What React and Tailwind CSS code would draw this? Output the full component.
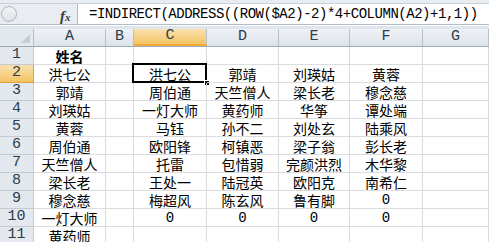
import React from "react";

const cols = [
  { key: "A", w: "w-[72px]" },
  { key: "B", w: "w-[28px]" },
  { key: "C", w: "w-[73px]" },
  { key: "D", w: "w-[72px]" },
  { key: "E", w: "w-[71px]" },
  { key: "F", w: "w-[73px]" },
  { key: "G", w: "flex-1" },
];

const data = [
  ["姓名", "", "", "", "", "", ""],
  ["洪七公", "", "洪七公", "郭靖", "刘瑛姑", "黄蓉", ""],
  ["郭靖", "", "周伯通", "天竺僧人", "梁长老", "穆念慈", ""],
  ["刘瑛姑", "", "一灯大师", "黄药师", "华筝", "谭处端", ""],
  ["黄蓉", "", "马钰", "孙不二", "刘处玄", "陆乘风", ""],
  ["周伯通", "", "欧阳锋", "柯镇恶", "梁子翁", "彭长老", ""],
  ["天竺僧人", "", "托雷", "包惜弱", "完颜洪烈", "木华黎", ""],
  ["梁长老", "", "王处一", "陆冠英", "欧阳克", "南希仁", ""],
  ["穆念慈", "", "梅超风", "陈玄风", "鲁有脚", "0", ""],
  ["一灯大师", "", "0", "0", "0", "0", ""],
  ["黄药师", "", "", "", "", "", ""],
];

const cjk = { fontFamily: '"Noto Sans CJK SC", "Noto Sans", sans-serif' };
const mono = { fontFamily: '"Liberation Mono", "DejaVu Sans Mono", monospace' };

export default function App() {
  return (
    <div className="w-[489px] h-[242px] overflow-hidden bg-white relative">
      {/* formula bar area */}
      <div className="h-[29px] bg-[#dfe5ec] flex flex-col">
        <div className="h-[4px] bg-[#e8edf2] border-b border-[#c9d1da]" />
        <div className="h-[21px] flex border-b border-[#b3bcc7]">
          <div className="w-[78px] bg-[#e9edf1] flex items-center relative border-r border-[#b3bcc7]">
            <div className="w-[16px] h-[16px] ml-[1px] rounded-full border border-[#aeb6c0] bg-gradient-to-b from-[#f4f6f8] to-[#dde2e8]" />
            <span
              className="absolute left-[60px] top-[1px] text-[15px] italic font-bold text-[#3a3a3a]"
              style={{ fontFamily: '"Liberation Serif", serif' }}
            >
              f<span className="text-[11px]">x</span>
            </span>
          </div>
          <div
            className="flex-1 bg-white flex items-center pl-[11px] text-[14px] tracking-[-0.47px] text-black"
            style={mono}
          >
            =INDIRECT(ADDRESS((ROW($A2)-2)*4+COLUMN(A2)+1,1))
          </div>
        </div>
        <div className="h-[1px] bg-white" />
      </div>

      {/* header row */}
      <div className="flex h-[18px] border-b border-[#9eabbb]">
        <div className="w-[34px] bg-[#e4e9ef] border-r border-[#b7c1cc] relative">
          <div className="absolute right-[3px] bottom-[3px] w-0 h-0 border-l-[9px] border-l-transparent border-b-[9px] border-b-[#c8ced6]" />
        </div>
        {cols.map((c) => (
          <div
            key={c.key}
            className={`${c.w} flex items-center justify-center border-r border-[#b7c1cc] text-[15px] text-[#2d3c4b] ${
              c.key === "C"
                ? "bg-gradient-to-b from-[#fbe1ae] to-[#f3c461] border-b-2 border-b-[#f2a93c]"
                : "bg-gradient-to-b from-[#eef1f5] to-[#dfe4ea]"
            }`}
            style={mono}
          >
            {c.key}
          </div>
        ))}
      </div>

      {/* rows */}
      {data.map((row, ri) => (
        <div key={ri} className="flex h-[18px]">
          <div
            className={`w-[34px] flex items-center justify-center border-r border-b text-[15px] text-[#2d3c4b] ${
              ri === 1
                ? "bg-gradient-to-b from-[#fbe1ae] to-[#f3c461] border-[#e0a340]"
                : "bg-[#e4e9ef] border-[#c3cad3]"
            }`}
            style={mono}
          >
            {ri + 1}
          </div>
          {cols.map((c, ci) => {
            const v = row[ci];
            const isNum = v === "0";
            const selected = ri === 1 && c.key === "C";
            return (
              <div
                key={c.key}
                className={`${c.w} relative flex items-center justify-center border-r border-b border-[#dadcdd] text-[14px] text-black leading-none ${
                  ri === 0 && ci === 0 ? "font-bold" : ""
                }`}
                style={isNum ? mono : cjk}
              >
                {v}
                {selected && (
                  <>
                    <div className="absolute left-[-2px] top-[-2px] right-[-1px] bottom-[-1px] border-2 border-black pointer-events-none" />
                    <div className="absolute right-[-4px] bottom-[-4px] w-[6px] h-[6px] bg-black border border-white" />
                  </>
                )}
              </div>
            );
          })}
        </div>
      ))}
    </div>
  );
}
